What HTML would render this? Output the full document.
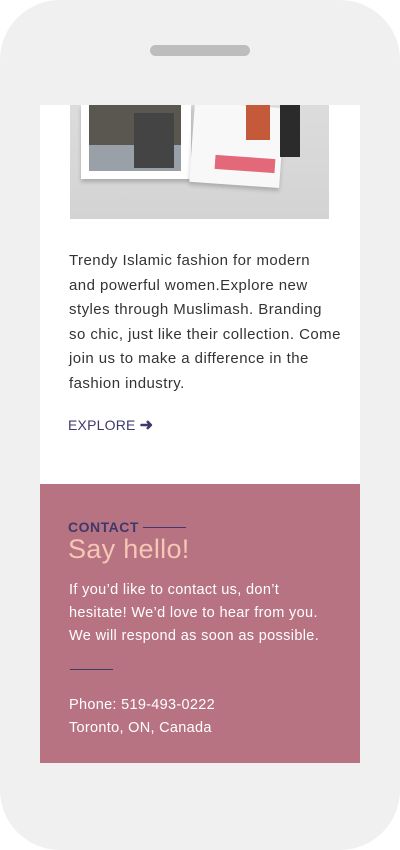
<!DOCTYPE html>
<html><head><style>
*{margin:0;padding:0;box-sizing:border-box}
body{width:400px;height:850px;background:#fff;position:relative;overflow:hidden;font-family:"Liberation Sans",sans-serif}
.frame{position:absolute;left:0;top:0;width:400px;height:850px;background:#f0f0f0;border-radius:60px}
.notch{position:absolute;left:150px;top:45px;width:100px;height:11px;background:#bdbdbd;border-radius:6px}
.screen{position:absolute;left:40px;top:105px;width:320px;height:658px;background:#fff;overflow:hidden}
.img{position:absolute;left:30px;top:0;width:259px;height:114px;background:linear-gradient(#dcdcdc,#d3d3d3)}
.p{position:absolute;left:29px;top:144px;width:272px;font-size:15px;line-height:24.5px;color:#333;letter-spacing:.45px}
.ex{position:absolute;left:28px;top:310px;font-size:14px;color:#3d3a6b;letter-spacing:.2px}
.pink{position:absolute;left:0;top:379px;width:320px;height:279px;background:#b87382}
.c{position:absolute;left:28px;top:35px;font-size:14px;font-weight:bold;color:#3d3a6b;letter-spacing:.5px}
.cl{position:absolute;left:103px;top:43px;width:43px;height:1px;background:#3d3a6b}
.h{position:absolute;left:28px;top:50px;font-size:27px;color:#f5c7b5;letter-spacing:.3px}
.t{position:absolute;left:29px;top:95px;width:268px;font-size:14.5px;line-height:23px;color:#fff;letter-spacing:.35px}
.ln{position:absolute;left:30px;top:185px;width:43px;height:1px;background:#3d3a6b}
.ph{position:absolute;left:29px;top:210px;font-size:14.5px;line-height:23px;color:#fff;letter-spacing:.3px}
</style></head><body>
<div class="frame"></div><div class="notch"></div>
<div class="screen">
<div class="img">
<div style="position:absolute;left:11px;top:0;width:110px;height:74px;background:#fff;box-shadow:0 3px 4px rgba(0,0,0,.2)"></div>
<div style="position:absolute;left:19px;top:0;width:92px;height:66px;background:#5a5650"></div>
<div style="position:absolute;left:19px;top:40px;width:92px;height:26px;background:#9aa0a8"></div>
<div style="position:absolute;left:64px;top:8px;width:40px;height:55px;background:#444"></div>
<div style="position:absolute;left:122px;top:0;width:90px;height:80px;background:#f8f8f8;transform:rotate(4deg);box-shadow:0 3px 4px rgba(0,0,0,.2)"></div>
<div style="position:absolute;left:176px;top:0;width:24px;height:35px;background:#c55a3a"></div>
<div style="position:absolute;left:145px;top:52px;width:60px;height:14px;background:#e2687a;transform:rotate(4deg)"></div>
<div style="position:absolute;left:210px;top:0;width:20px;height:52px;background:#2b2b2b"></div>
</div>
<div class="p">Trendy Islamic fashion for modern and powerful women.Explore new styles through Muslimash. Branding so chic, just like their collection. Come join us to make a difference in the fashion industry.</div>
<div class="ex">EXPLORE <b style="font-size:16px">➜</b></div>
<div class="pink">
<div class="c">CONTACT</div><div class="cl"></div>
<div class="h">Say hello!</div>
<div class="t">If you’d like to contact us, don’t hesitate! We’d love to hear from you. We will respond as soon as possible.</div>
<div class="ln"></div>
<div class="ph">Phone: 519-493-0222<br>Toronto, ON, Canada</div>
</div>
</div>
</body></html>
